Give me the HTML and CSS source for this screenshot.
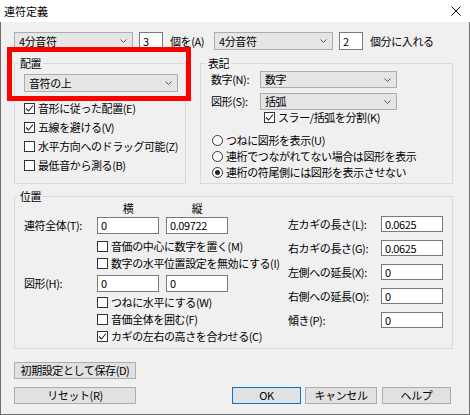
FILE: index.html
```html
<!DOCTYPE html>
<html lang="ja">
<head>
<meta charset="utf-8">
<title>連符定義</title>
<link rel="stylesheet" href="styles.css">
</head>
<body>
<div class="window">
  <div class="titlebar">
    <span class="title">連符定義</span>
    <svg class="close" width="10" height="10" viewBox="0 0 10 10"><path d="M0.5 0.5 L9.5 9.5 M9.5 0.5 L0.5 9.5" stroke="#111" stroke-width="1" fill="none"/></svg>
  </div>
  <div class="client">
    <div class="toprow">
      <div class="combo w119"><span>4分音符</span><svg class="chev" width="7" height="4" viewBox="0 0 7 4"><polyline points="0.5,0.5 3.5,3.5 6.5,0.5" fill="none" stroke="#555"/></svg></div>
      <div class="input w24 ml6">3</div>
      <span class="toplbl ml7">個を(A)</span>
      <div class="combo w119"><span>4分音符</span><svg class="chev" width="7" height="4" viewBox="0 0 7 4"><polyline points="0.5,0.5 3.5,3.5 6.5,0.5" fill="none" stroke="#555"/></svg></div>
      <div class="input w24 ml6">2</div>
      <span class="ml7">個分に入れる</span>
    </div>

    <div class="grouprow">
      <fieldset class="group g-place">
        <legend>配置</legend>
        <div class="combo w154 h18"><span>音符の上</span><svg class="chev" width="7" height="4" viewBox="0 0 7 4"><polyline points="0.5,0.5 3.5,3.5 6.5,0.5" fill="none" stroke="#555"/></svg></div>
        <div class="checklist">
          <label class="check row19"><span class="cb"><svg width="9" height="9" viewBox="0 0 9 9"><polyline points="1,4.5 3.5,7 8,1.5" fill="none" stroke="#222" stroke-width="1.1"/></svg></span><span>音形に従った配置(E)</span></label>
          <label class="check row19"><span class="cb"><svg width="9" height="9" viewBox="0 0 9 9"><polyline points="1,4.5 3.5,7 8,1.5" fill="none" stroke="#222" stroke-width="1.1"/></svg></span><span>五線を避ける(V)</span></label>
          <label class="check row19"><span class="cb"></span><span>水平方向へのドラッグ可能(Z)</span></label>
          <label class="check row19"><span class="cb"></span><span>最低音から測る(B)</span></label>
        </div>
      </fieldset>

      <fieldset class="group g-notation">
        <legend>表記</legend>
        <div class="field-row">
          <span class="nlabel">数字(N):</span>
          <div class="combo w137 h17"><span>数字</span><svg class="chev" width="7" height="4" viewBox="0 0 7 4"><polyline points="0.5,0.5 3.5,3.5 6.5,0.5" fill="none" stroke="#555"/></svg></div>
        </div>
        <div class="field-row mt5">
          <span class="nlabel">図形(S):</span>
          <div class="combo w137 h17"><span>括弧</span><svg class="chev" width="7" height="4" viewBox="0 0 7 4"><polyline points="0.5,0.5 3.5,3.5 6.5,0.5" fill="none" stroke="#555"/></svg></div>
        </div>
        <label class="check split"><span class="cb"><svg width="9" height="9" viewBox="0 0 9 9"><polyline points="1,4.5 3.5,7 8,1.5" fill="none" stroke="#222" stroke-width="1.1"/></svg></span><span>スラー/括弧を分割(K)</span></label>
        <div class="radios">
          <label class="radio"><span class="rb"></span><span>つねに図形を表示(U)</span></label>
          <label class="radio"><span class="rb"></span><span>連桁でつながれてない場合は図形を表示</span></label>
          <label class="radio"><span class="rb on"></span><span>連桁の符尾側には図形を表示させない</span></label>
        </div>
      </fieldset>
    </div>

    <fieldset class="group g-pos">
      <legend>位置</legend>
      <div class="pos-body">
        <div class="pos-left">
          <div class="pos-head"><span class="colhead">横</span><span class="colhead ml7">縦</span></div>
          <div class="pos-row">
            <span class="pos-label">連符全体(T):</span>
            <div class="input w62 h17">0</div>
            <div class="input w62 h17 ml7">0.09722</div>
          </div>
          <div class="pos-checks first">
            <label class="check row16"><span class="cb"></span><span>音価の中心に数字を置く(M)</span></label>
            <label class="check row16 mt1"><span class="cb"></span><span>数字の水平位置設定を無効にする(I)</span></label>
          </div>
          <div class="pos-row">
            <span class="pos-label">図形(H):</span>
            <div class="input w62 h17">0</div>
            <div class="input w62 h17 ml7">0</div>
          </div>
          <div class="pos-checks second">
            <label class="check row17"><span class="cb"></span><span>つねに水平にする(W)</span></label>
            <label class="check row17"><span class="cb"></span><span>音価全体を囲む(F)</span></label>
            <label class="check row17"><span class="cb"><svg width="9" height="9" viewBox="0 0 9 9"><polyline points="1,4.5 3.5,7 8,1.5" fill="none" stroke="#222" stroke-width="1.1"/></svg></span><span>カギの左右の高さを合わせる(C)</span></label>
          </div>
        </div>
        <div class="pos-right">
          <div class="rrow"><span class="rlabel">左カギの長さ(L):</span><div class="input w62 h16">0.0625</div></div>
          <div class="rrow"><span class="rlabel">右カギの長さ(G):</span><div class="input w62 h16">0.0625</div></div>
          <div class="rrow"><span class="rlabel">左側への延長(X):</span><div class="input w62 h16">0</div></div>
          <div class="rrow"><span class="rlabel">右側への延長(O):</span><div class="input w62 h16">0</div></div>
          <div class="rrow"><span class="rlabel">傾き(P):</span><div class="input w62 h16">0</div></div>
        </div>
      </div>
    </fieldset>

    <div class="btnrow first-btns">
      <button class="btn w122">初期設定として保存(D)</button>
    </div>
    <div class="btnrow second-btns">
      <button class="btn w122">リセット(R)</button>
      <button class="btn btn-ok">OK</button>
      <button class="btn btn-cancel">キャンセル</button>
      <button class="btn btn-help">ヘルプ</button>
    </div>
  </div>
  <div class="annot"></div>
</div>
</body>
</html>
```

FILE: styles.css
```css
* { box-sizing: border-box; }
html, body { margin: 0; padding: 0; background: #fff; }
body {
  font-family: "Noto Sans CJK JP", "Noto Sans", sans-serif;
  font-size: 11px;
  line-height: 13px;
  letter-spacing: -0.4px;
  color: #000;
  white-space: nowrap;
}
.window {
  position: relative;
  width: 470px;
  height: 415px;
  overflow: hidden;
  display: flex;
  flex-direction: column;
}
.titlebar {
  height: 22px;
  flex: none;
  background: #fff;
  display: flex;
  align-items: center;
  padding-left: 4px;
}
.title { flex: 1; font-size: 11px; letter-spacing: 0; }
.close { margin-right: 9px; display: block; }
.client {
  flex: 1;
  background: #f0f0f0;
  border: 1px solid #6e6e6e;
  border-top: none;
  padding: 10px 0 0 13px;
}

/* generic controls */
.combo {
  height: 18px;
  background: #e5e5e5;
  border: 1px solid #adadad;
  display: flex;
  align-items: center;
  padding-left: 4px;
  flex: none;
}
.combo .chev { margin-left: auto; margin-right: 5px; display: block; }
.input {
  height: 18px;
  background: #fff;
  border: 1px solid #7a7a7a;
  padding-left: 3px;
  display: flex;
  align-items: center;
  flex: none;
}
.w24 { width: 24px; }
.w62 { width: 62px; }
.w119 { width: 119px; }
.w122 { width: 122px; }
.w137 { width: 137px; }
.w154 { width: 154px; }
.h16 { height: 16px; }
.h17 { height: 17px; }
.h18 { height: 18px; }
.ml6 { margin-left: 6px; }
.ml7 { margin-left: 7px; }
.mt1 { margin-top: 1px; }
.mt5 { margin-top: 5px; }

.check, .radio { display: flex; align-items: center; white-space: nowrap; }
.cb {
  width: 11px;
  height: 11px;
  border: 1px solid #333;
  background: #fff;
  margin-right: 3px;
  flex: none;
  display: flex;
  align-items: center;
  justify-content: center;
}
.cb svg { display: block; }
.rb {
  width: 11px;
  height: 11px;
  border: 1px solid #333;
  border-radius: 50%;
  background: #fff;
  margin-right: 3px;
  flex: none;
  display: flex;
  align-items: center;
  justify-content: center;
}
.rb.on::after {
  content: "";
  width: 5px;
  height: 5px;
  border-radius: 50%;
  background: #222;
}

/* top row */
.toprow { display: flex; align-items: center; height: 18px; }
.toplbl { width: 44px; }

/* group boxes */
.group {
  margin: 0;
  min-width: 0;
  border: 1px solid #d9d9d9;
}
.group legend {
  padding: 0 2px;
  line-height: 13px;
  height: 13px;
  margin-left: -6px;
}
.grouprow { display: flex; margin-top: 7px; }
.g-place {
  width: 172px;
  padding: 4px 6px 8px 9px;
}
.checklist { margin-top: 7px; }
.row19 { height: 19px; }
.row17 { height: 17px; }
.row16 { height: 16px; }

.g-notation {
  width: 253px;
  margin-left: 14px;
  padding: 1px 6px 3px 10px;
}
.g-notation legend { margin-left: -5px; }
.field-row { display: flex; align-items: center; }
.nlabel { width: 49px; }
.split { height: 14px; padding-left: 53px; }
.radios { margin-top: 8px; padding-left: 1px; }
.radio { height: 16px; }

/* position group */
.g-pos {
  width: 439px;
  margin-top: 6px;
  padding: 0 0 3px 9px;
}
.pos-body { display: flex; }
.pos-left { width: 204px; flex: none; }
.pos-head { display: flex; height: 10px; line-height: 10px; margin-left: 73px; }
.colhead { width: 62px; text-align: center; }
.pos-row { display: flex; align-items: center; margin-top: 4px; }
.pos-label { width: 73px; flex: none; }
.pos-checks { margin-left: 73px; }
.pos-checks.first { margin-top: 4px; }
.pos-checks.second { margin-top: 2px; }
.pos-right { margin-left: 60px; padding-top: 13px; display: flex; flex-direction: column; gap: 8px; flex: none; }
.rrow { display: flex; align-items: center; height: 16px; }
.rlabel { width: 93px; flex: none; }

/* buttons */
.btnrow { display: flex; }
.first-btns { margin-top: 13px; }
.second-btns { margin-top: 8px; }
.btn {
  height: 17px;
  margin: 0;
  padding: 0;
  background: #e1e1e1;
  border: 1px solid #adadad;
  font-family: inherit;
  font-size: 11px;
  letter-spacing: -0.4px;
  line-height: 13px;
  color: #000;
  text-align: center;
  flex: none;
}
.btn-ok { width: 69px; margin-left: 96px; border-color: #0078d7; }
.btn-cancel { width: 72px; margin-left: 4px; }
.btn-help { width: 69px; margin-left: 5px; }

/* red annotation frame */
.annot {
  position: absolute;
  left: 7px;
  top: 47px;
  width: 184px;
  height: 54px;
  border: 5px solid #ff0000;
  z-index: 2;
  pointer-events: none;
}
```
